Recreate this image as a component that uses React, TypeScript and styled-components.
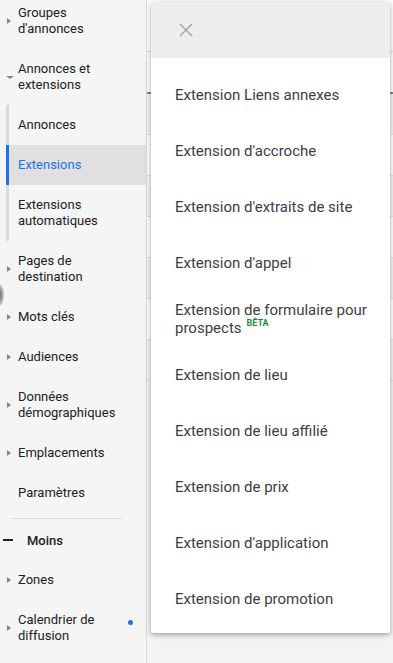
import React from "react";
import styled, { createGlobalStyle } from "styled-components";

type NavEntry = {
  label: React.ReactNode;
  arrow?: "right" | "down" | "none";
  tall?: boolean;
  dot?: boolean;
};

const topItems: NavEntry[] = [
  { label: "Groupes d'annonces", arrow: "right", tall: true },
  { label: "Annonces et extensions", arrow: "down", tall: true },
];

const subItems = [
  { label: "Annonces", active: false },
  { label: "Extensions", active: true },
  { label: "Extensions automatiques", active: false, tall: true },
];

const middleItems: NavEntry[] = [
  { label: "Pages de destination", arrow: "right", tall: true },
  { label: "Mots clés", arrow: "right" },
  { label: "Audiences", arrow: "right" },
  { label: "Données démographiques", arrow: "right", tall: true },
  { label: "Emplacements", arrow: "right" },
  { label: "Paramètres", arrow: "none" },
];

const bottomItems: NavEntry[] = [
  { label: "Zones", arrow: "right" },
  { label: "Calendrier de diffusion", arrow: "right", tall: true, dot: true },
];

const extensions = [
  "Extension Liens annexes",
  "Extension d'accroche",
  "Extension d'extraits de site",
  "Extension d'appel",
  "beta",
  "Extension de lieu",
  "Extension de lieu affilié",
  "Extension de prix",
  "Extension d'application",
  "Extension de promotion",
];

export default function App() {
  const renderNav = (items: NavEntry[]) =>
    items.map((item, i) => (
      <NavRow key={i} tall={item.tall}>
        <ArrowCell>
          {item.arrow === "right" && <ArrowRight />}
          {item.arrow === "down" && <ArrowDown />}
        </ArrowCell>
        <NavLabel>{item.label}</NavLabel>
        {item.dot && <Dot />}
      </NavRow>
    ));

  return (
    <>
      <GlobalStyle />
      <Page>
        <Sidebar>
          <SideShadow />
          <NavList>
            {renderNav(topItems)}
            <SubGroup>
              {subItems.map((s) => (
                <SubRow key={s.label} active={s.active} tall={s.tall}>
                  <SubLabel>{s.label}</SubLabel>
                </SubRow>
              ))}
            </SubGroup>
            {renderNav(middleItems)}
            <Divider />
            <LessRow>
              <Dash />
              <LessLabel>Moins</LessLabel>
            </LessRow>
            {renderNav(bottomItems)}
          </NavList>
        </Sidebar>

        <Main>
          <Table>
            <TableHead />
            <TableRow />
            <TableRule />
            {Array.from({ length: 7 }).map((_, i) => (
              <TableRow key={i} shaded={i % 2 === 0} />
            ))}
          </Table>

          <Menu>
            <MenuHeader>
              <CloseButton aria-label="Fermer">
                <svg width="16" height="16" viewBox="0 0 16 16">
                  <path
                    d="M2 2 L14 14 M14 2 L2 14"
                    stroke="#a0a0a0"
                    strokeWidth="1.4"
                    fill="none"
                  />
                </svg>
              </CloseButton>
            </MenuHeader>
            <MenuList>
              {extensions.map((e) =>
                e === "beta" ? (
                  <MenuItem key={e}>
                    <span>
                      <span>Extension de formulaire pour </span>
                      <NoWrap>
                        prospects
                        <Beta>BÊTA</Beta>
                      </NoWrap>
                    </span>
                  </MenuItem>
                ) : (
                  <MenuItem key={e}>{e}</MenuItem>
                )
              )}
            </MenuList>
          </Menu>
        </Main>
      </Page>
    </>
  );
}

// SECTION styled - global
const GlobalStyle = createGlobalStyle`
  html, body {
    margin: 0;
    padding: 0;
    background: #f1f3f4;
  }
  body {
    font-family: Roboto, "Noto Sans", Arial, sans-serif;
    -webkit-font-smoothing: antialiased;
  }
`;

const Page = styled.div`
  display: flex;
  width: 393px;
  height: 663px;
  overflow: hidden;
`;
// !SECTION styled - global END

// SECTION styled - sidebar
const Sidebar = styled.nav`
  position: relative;
  width: 146px;
  flex-shrink: 0;
  background-color: #f5f5f5;
  border-right: 1px solid #dadce0;
  overflow: hidden;
`;

const SideShadow = styled.div`
  position: absolute;
  left: -6px;
  top: 284px;
  width: 10px;
  height: 22px;
  border-radius: 50%;
  background: radial-gradient(
    ellipse at center,
    rgba(40, 40, 40, 0.75) 0%,
    rgba(60, 60, 60, 0.35) 55%,
    rgba(60, 60, 60, 0) 100%
  );
`;

const NavList = styled.div`
  display: flex;
  flex-direction: column;
  margin-top: -7px;
`;

const NavRow = styled.div<{ tall?: boolean }>`
  display: flex;
  align-items: center;
  height: ${({ tall }) => (tall ? "56px" : "40px")};
  padding-right: 8px;
`;

const ArrowCell = styled.div`
  width: 18px;
  flex-shrink: 0;
  display: flex;
  align-items: center;
  justify-content: flex-start;
  padding-left: 6px;
  box-sizing: border-box;
`;

const ArrowRight = styled.span`
  display: block;
  width: 0;
  height: 0;
  border-top: 3px solid transparent;
  border-bottom: 3px solid transparent;
  border-left: 4px solid #80868b;
  margin-left: 1px;
`;

const ArrowDown = styled.span`
  display: block;
  width: 0;
  height: 0;
  border-left: 4px solid transparent;
  border-right: 4px solid transparent;
  border-top: 3px solid #80868b;
`;

const NavLabel = styled.span`
  flex: 1;
  max-width: 104px;
  font-size: 13px;
  line-height: 16px;
  color: #202124;
`;

const Dot = styled.span`
  width: 5px;
  height: 5px;
  border-radius: 50%;
  background-color: #1a73e8;
  margin-left: auto;
  margin-right: 5px;
  margin-top: -12px;
`;

const SubGroup = styled.div`
  display: flex;
  flex-direction: column;
  margin-left: 6px;
`;

const SubRow = styled.div<{ active?: boolean; tall?: boolean }>`
  display: flex;
  align-items: center;
  height: ${({ tall }) => (tall ? "56px" : "40px")};
  padding: 0 8px 0 9px;
  border-left: 3px solid ${({ active }) => (active ? "#1a73e8" : "#dadada")};
  background-color: ${({ active }) => (active ? "#e0e0e0" : "transparent")};
  color: ${({ active }) => (active ? "#1a73e8" : "#202124")};
`;

const SubLabel = styled.span`
  max-width: 104px;
  font-size: 13px;
  line-height: 16px;
`;

const Divider = styled.div`
  height: 1px;
  margin: 5px 24px 1px 10px;
  background-color: #dadce0;
`;

const LessRow = styled.div`
  display: flex;
  align-items: center;
  height: 40px;
  padding-left: 3px;
`;

const Dash = styled.span`
  width: 10px;
  height: 2px;
  background-color: #202124;
  margin-right: 14px;
`;

const LessLabel = styled.span`
  font-size: 13px;
  font-weight: 500;
  color: #202124;
`;
// !SECTION styled - sidebar END

// SECTION styled - main
const Main = styled.main`
  position: relative;
  flex: 1;
  background-color: #f1f3f4;
`;

const Table = styled.div`
  display: flex;
  flex-direction: column;
  background-color: #ffffff;
`;

const TableHead = styled.div`
  height: 51px;
  border-bottom: 1px solid #e0e0e0;
`;

const TableRule = styled.div`
  height: 2px;
  margin-top: -1px;
  background-color: #80868b;
`;

const TableRow = styled.div<{ shaded?: boolean }>`
  height: 40px;
  border-bottom: 1px solid #e0e0e0;
  background-color: ${({ shaded }) => (shaded ? "#f4f4f4" : "#ffffff")};
`;

const Menu = styled.div`
  position: absolute;
  top: 2px;
  left: 4px;
  width: 239px;
  background-color: #ffffff;
  border-radius: 2px;
  box-shadow: 0 2px 4px rgba(0, 0, 0, 0.25), 0 1px 8px rgba(0, 0, 0, 0.12);
  overflow: hidden;
`;

const MenuHeader = styled.div`
  display: flex;
  align-items: center;
  height: 56px;
  padding-left: 27px;
  background-color: #eeeeee;
`;

const CloseButton = styled.div`
  display: flex;
  width: 16px;
  height: 16px;
  cursor: pointer;
`;

const MenuList = styled.div`
  display: flex;
  flex-direction: column;
  padding: 9px 0 6px;
`;

const MenuItem = styled.div`
  display: flex;
  align-items: center;
  height: 56px;
  padding: 0 14px 0 24px;
  font-size: 15px;
  line-height: 17px;
  color: #3c4043;
  cursor: pointer;
`;

const NoWrap = styled.span`
  white-space: nowrap;
`;

const Beta = styled.span`
  display: inline-block;
  font-size: 9px;
  font-weight: 700;
  line-height: 9px;
  color: #1e8e3e;
  vertical-align: 7px;
  margin-left: 5px;
`;
// !SECTION styled - main END
